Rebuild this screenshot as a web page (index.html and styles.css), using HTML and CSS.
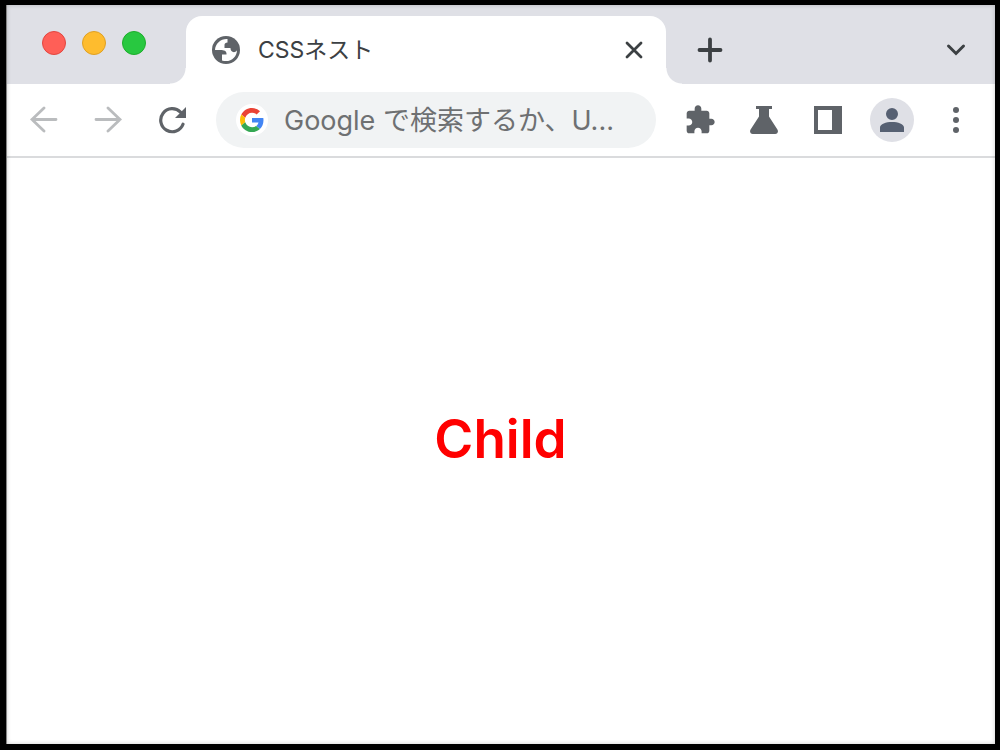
FILE: index.html
```html
<!DOCTYPE html>
<html lang="ja">
<head>
<meta charset="utf-8">
<title>CSSネスト</title>
<link rel="stylesheet" href="styles.css">
</head>
<body>
<div class="window">
  <header class="tab-strip">
    <div class="lights">
      <button class="light light-close" aria-label="閉じる"></button>
      <button class="light light-minimize" aria-label="最小化"></button>
      <button class="light light-expand" aria-label="拡大"></button>
    </div>
    <div class="tab">
      <svg class="globe" viewBox="0 0 28 28" aria-hidden="true">
        <circle cx="14" cy="14" r="14" fill="#5f6368"/>
        <path fill="#fff" d="M15.500 3C9 2.500 3.300 7.500 3 14H8.500C12 14 14.500 15 14.500 17.500V18.500H10V24.500C18.500 27 25 21 25 14.200C23.500 16.200 22 16.500 20.500 15.800C18.800 15 18.500 13 18.500 12H12.500V8.800C12.500 7.500 13.500 6.500 15.500 6.500Z"/>
      </svg>
      <span class="tab-title">CSSネスト</span>
      <button class="icon-button tab-close" aria-label="タブを閉じる">
        <svg width="18" height="18" viewBox="0 0 18 18"><path d="M2 2L16 16M16 2L2 16" fill="none" stroke="#3c4043" stroke-width="2.800" stroke-linecap="round"/></svg>
      </button>
    </div>
    <button class="icon-button new-tab" aria-label="新しいタブ">
      <svg width="26" height="26" viewBox="0 0 26 26"><path d="M13 2.500V23.500M2.500 13H23.500" fill="none" stroke="#3c4043" stroke-width="3.800" stroke-linecap="round"/></svg>
    </button>
    <button class="icon-button tab-search" aria-label="タブを検索">
      <svg width="20" height="14" viewBox="0 0 20 14"><path d="M2.500 3L10 10.500L17.500 3" fill="none" stroke="#3c4043" stroke-width="3" stroke-linecap="round"/></svg>
    </button>
  </header>
  <nav class="toolbar">
    <button class="icon-button" aria-label="戻る">
      <svg width="28" height="28" viewBox="0 0 28 28"><path d="M26 13.500H2M14 2L2 13.500L14 25" fill="none" stroke="#babcbe" stroke-width="2.800" stroke-linecap="round"/></svg>
    </button>
    <button class="icon-button" aria-label="進む">
      <svg width="28" height="28" viewBox="0 0 28 28"><path d="M2 13.500H26M14 2L26 13.500L14 25" fill="none" stroke="#babcbe" stroke-width="2.800" stroke-linecap="round"/></svg>
    </button>
    <button class="icon-button" aria-label="再読み込み">
      <svg width="28" height="28" viewBox="0 0 28 28"><path d="M25 18.200A11.500 11.500 0 1 1 22.500 6.200" fill="none" stroke="#5f6368" stroke-width="3.200" stroke-linecap="round"/><path d="M28 1V12H17Z" fill="#5f6368"/></svg>
    </button>
    <label class="omnibox">
      <span class="engine">
        <svg width="24" height="24" viewBox="0 0 48 48" aria-hidden="true">
          <path fill="#EA4335" d="M24 9.500c3.540 0 6.710 1.220 9.210 3.600l6.850-6.850C35.900 2.380 30.470 0 24 0 14.620 0 6.510 5.380 2.560 13.220l7.980 6.190C12.430 13.720 17.740 9.500 24 9.500z"/>
          <path fill="#4285F4" d="M46.980 24.550c0-1.570-.15-3.090-.38-4.550H24v9.020h12.940c-.58 2.960-2.260 5.480-4.780 7.180l7.730 6c4.510-4.180 7.090-10.360 7.090-17.650z"/>
          <path fill="#FBBC05" d="M10.530 28.590c-.48-1.450-.76-2.990-.76-4.590s.27-3.140.76-4.590l-7.980-6.190C.92 16.460 0 20.120 0 24c0 3.880.92 7.540 2.560 10.780l7.970-6.190z"/>
          <path fill="#34A853" d="M24 48c6.480 0 11.930-2.130 15.890-5.810l-7.730-6c-2.150 1.450-4.920 2.300-8.160 2.300-6.260 0-11.570-4.220-13.470-9.910l-7.980 6.190C6.510 42.620 14.620 48 24 48z"/>
        </svg>
      </span>
      <input class="address" type="text" aria-label="検索またはURL" placeholder="Google で検索するか、U...">
    </label>
    <div class="actions">
      <button class="icon-button extensions" aria-label="拡張機能">
        <svg width="32" height="32" viewBox="0 0 24 24"><path fill="#5f6368" d="M20.500 11H19V7c0-1.100-.9-2-2-2h-4V3.500C13 2.120 11.880 1 10.500 1S8 2.120 8 3.500V5H4c-1.100 0-1.990.9-1.990 2v3.800H3.500c1.490 0 2.700 1.210 2.700 2.700s-1.210 2.700-2.700 2.700H2V20c0 1.100.9 2 2 2h3.800v-1.500c0-1.490 1.210-2.700 2.700-2.700 1.490 0 2.700 1.210 2.700 2.700V22H17c1.100 0 2-.9 2-2v-4h1.500c1.380 0 2.500-1.120 2.500-2.500S21.880 11 20.500 11z"/></svg>
      </button>
      <button class="icon-button" aria-label="試験運用機能">
        <svg width="28" height="28" viewBox="0 0 28 28"><path fill="#5f6368" d="M6 0H22V3H19V10.500L27.400 23.500C28.700 25.600 27.600 28 25.200 28H2.800C.4 28-.7 25.600.6 23.500L9 10.500V3H6Z"/></svg>
      </button>
      <button class="icon-button" aria-label="サイドパネル">
        <svg width="28" height="28" viewBox="0 0 28 28"><path fill="#5f6368" fill-rule="evenodd" d="M0 0H28V28H0ZM4 4V24H18V4Z"/></svg>
      </button>
      <button class="icon-button avatar" aria-label="プロフィール">
        <svg width="24" height="24" viewBox="0 0 24 24"><path fill="#566072" d="M12 0A6 6 0 1 1 12 12A6 6 0 1 1 12 0ZM0 24V19.500C0 16 6 14 12 14S24 16 24 19.500V24Z"/></svg>
      </button>
      <button class="icon-button" aria-label="メニュー">
        <svg width="8" height="28" viewBox="0 0 8 28" fill="#5f6368"><circle cx="4" cy="4" r="3"/><circle cx="4" cy="14" r="3"/><circle cx="4" cy="24" r="3"/></svg>
      </button>
    </div>
  </nav>
  <main class="page">
    <div class="child">Child</div>
  </main>
</div>
</body>
</html>
```
FILE: styles.css
```css
* {
  box-sizing: border-box;
}

body {
  margin: 0;
  font-family: Inter, "Noto Sans CJK JP", sans-serif;
}

.window {
  position: relative;
  display: flex;
  flex-direction: column;
  min-height: 100vh;
  border: solid #000;
  border-width: 5px 5px 6px 6px;
  background: #fff;
}

.window::after {
  content: "";
  position: absolute;
  inset: 0;
  border-left: 1px solid #858585;
  box-shadow: inset 0 0 4px rgba(0, 0, 0, 0.2);
  pointer-events: none;
}

.tab-strip {
  display: flex;
  align-items: center;
  height: 79px;
  padding: 11px 29px 0 36px;
  background: #dfe0e6;
}

.lights {
  display: flex;
  gap: 16px;
  margin-right: 40px;
  padding-bottom: 14px;
}

.light {
  width: 24px;
  height: 24px;
  padding: 0;
  border: 1px solid;
  border-radius: 50%;
}

.light-close {
  background: #ff5f57;
  border-color: #e2463f;
}

.light-minimize {
  background: #febc2e;
  border-color: #dfa023;
}

.light-expand {
  background: #28c840;
  border-color: #1dad2b;
}

.tab {
  position: relative;
  display: flex;
  flex: 0 1 480px;
  align-items: center;
  align-self: stretch;
  gap: 18px;
  padding: 0 23px 0 26px;
  border-radius: 16px 16px 0 0;
  background: #fff;
}

.tab::before,
.tab::after {
  content: "";
  position: absolute;
  bottom: 0;
  width: 16px;
  height: 16px;
}

.tab::before {
  right: 100%;
  background: radial-gradient(circle at 0 0, transparent 15px, #fff 16px);
}

.tab::after {
  left: 100%;
  background: radial-gradient(circle at 100% 0, transparent 15px, #fff 16px);
}

.globe {
  width: 28px;
  height: 28px;
}

.tab-title {
  flex: 1;
  color: #3c4043;
  font-size: 23px;
  line-height: 32px;
}

.icon-button {
  display: flex;
  flex: none;
  align-items: center;
  justify-content: center;
  padding: 0;
  border: 0;
  background: none;
}

.new-tab {
  margin-left: 31px;
}

.tab-search {
  margin-left: auto;
}

.toolbar {
  display: flex;
  align-items: center;
  gap: 36px;
  height: 74px;
  padding: 0 35px 0 24px;
  border-bottom: 2px solid #dadbdd;
}

.omnibox {
  display: flex;
  flex: 1;
  align-items: center;
  gap: 16px;
  min-width: 0;
  height: 56px;
  margin-left: -6px;
  padding: 0 20px;
  border-radius: 28px;
  background: #f1f3f4;
}

.engine {
  display: flex;
  flex: none;
  align-items: center;
  justify-content: center;
  width: 32px;
  height: 32px;
  border-radius: 50%;
  background: #fff;
}

.address {
  flex: 1;
  min-width: 0;
  padding: 2px 0 0;
  border: 0;
  outline: 0;
  background: none;
  font: 27px/36px Inter, "Noto Sans CJK JP", sans-serif;
}

.address::placeholder {
  color: #6e7072;
  opacity: 1;
}

.actions {
  display: flex;
  align-items: center;
  gap: 36px;
  margin-left: -8px;
}

.extensions {
  margin-right: -2px;
}

.avatar {
  width: 44px;
  height: 44px;
  margin: 0 2px 0 -8px;
  border-radius: 50%;
  background: #dfe0e6;
}

.page {
  display: grid;
  flex: 1;
  place-items: center;
  padding-bottom: 24px;
}

.child {
  color: #f00;
  font-size: 53px;
  font-weight: 600;
  line-height: 64px;
}
```
